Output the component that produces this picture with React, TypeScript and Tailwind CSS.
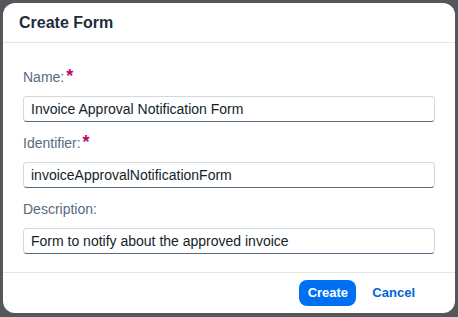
import React from "react";

function Field({ label, required, value }: { label: string; required?: boolean; value: string }) {
  return (
    <div className="flex flex-col">
      <div className="flex h-[20px] items-center text-[14px] leading-[20px] text-[#556b82]">
        <span>{label}</span>
        {required && (
          <span className="ml-[2px] self-start text-[18px] font-bold leading-[18px] text-[#ba066c]">*</span>
        )}
      </div>
      <div className="mt-[9px] flex h-[26px] items-center rounded-[4px] border border-[#d3d9df] border-b-[#556b82] bg-white px-[7px] text-[14px] text-[#131e29]">
        {value}
      </div>
    </div>
  );
}

export default function App() {
  return (
    <div
      className="flex h-[317px] w-[458px] bg-[#54575c] pl-[3px] pr-[3px] pt-[3px]"
      style={{ fontFamily: '"Liberation Sans", Arial, sans-serif' }}
    >
      <div className="flex h-[310px] w-full flex-col overflow-hidden rounded-[12px] bg-white">
        <div className="flex h-[40px] shrink-0 items-center border-b border-[#e5e5e5] px-[16px] text-[16px] font-bold text-[#1d2d3e]">
          Create Form
        </div>
        <div className="flex flex-col gap-[11px] px-[20px] pb-[18px] pt-[24px]">
          <Field label="Name:" required value="Invoice Approval Notification Form" />
          <Field label="Identifier:" required value="invoiceApprovalNotificationForm" />
          <Field label="Description:" value="Form to notify about the approved invoice" />
        </div>
        <div className="flex h-[41px] shrink-0 items-center justify-end gap-[8px] border-t border-[#e5e5e5] pr-[32px]">
          <button className="flex h-[26px] w-[57px] items-center justify-center rounded-[8px] bg-[#0070f2] text-[13px] font-bold text-white">
            Create
          </button>
          <button className="flex h-[26px] items-center justify-center px-[8px] text-[13px] font-bold text-[#0064d9]">
            Cancel
          </button>
        </div>
      </div>
    </div>
  );
}
